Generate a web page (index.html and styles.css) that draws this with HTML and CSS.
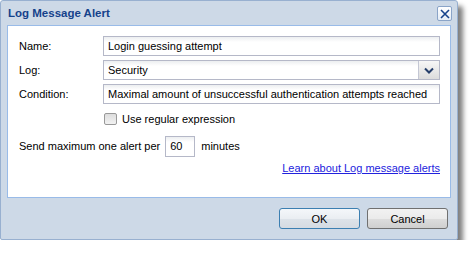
FILE: index.html
```html
<!DOCTYPE html>
<html>
<head>
  <meta charset="utf-8">
  <title>Log Message Alert</title>
  <link rel="stylesheet" href="styles.css">
</head>
<body>
  <div class="window">
    <div class="window-header">
      <span class="window-title">Log Message Alert</span>
      <span class="tool-close">
        <svg width="12" height="12" viewBox="0 0 12 12"><path d="M2 2 L10 10 M10 2 L2 10" stroke="#15428b" stroke-width="1.6" fill="none"/></svg>
      </span>
    </div>

    <div class="window-body">
      <div class="form-row">
        <label class="form-label">Name:</label>
        <div class="text-field"><span class="field-value">Login guessing attempt</span></div>
      </div>
      <div class="form-row">
        <label class="form-label">Log:</label>
        <div class="text-field combo">
          <span class="field-value">Security</span>
          <span class="combo-trigger">
            <svg width="10" height="7" viewBox="0 0 10 7"><path d="M1 1.5 L5 5.5 L9 1.5" stroke="#253e6a" stroke-width="2" fill="none"/></svg>
          </span>
        </div>
      </div>
      <div class="form-row">
        <label class="form-label">Condition:</label>
        <div class="text-field"><span class="field-value">Maximal amount of unsuccessful authentication attempts reached</span></div>
      </div>
      <div class="form-row check-row">
        <span class="checkbox"></span>
        <span>Use regular expression</span>
      </div>
      <div class="form-row send-row">
        <span>Send maximum one alert per</span>
        <div class="text-field small"><span class="field-value">60</span></div>
        <span>minutes</span>
      </div>
      <div class="link-row">
        <a href="#" class="help-link">Learn about Log message alerts</a>
      </div>
    </div>

    <div class="window-footer">
      <button class="btn btn-focus">OK</button>
      <button class="btn">Cancel</button>
    </div>
  </div>
</body>
</html>
```

FILE: styles.css
```css
* {
    font-family: "Liberation Sans", Arial, sans-serif;
    font-size: 11px;
    box-sizing: border-box;
}
body {
    margin: 0;
    background: #fff;
}
.window {
    width: 458px;
    height: 240px;
    border: 1px solid #98b0d0;
    border-radius: 3px 3px 2px 2px;
    background: #cdd9e7;
    box-shadow: 5px 6px 5px rgba(0, 0, 0, 0.5);
    display: flex;
    flex-direction: column;
}
.window-header {
    height: 24px;
    display: flex;
    align-items: center;
    justify-content: space-between;
    padding: 0 5px 0 7px;
}
.window-title {
    font-weight: bold;
    font-size: 11.5px;
    color: #15428b;
}
.tool-close {
    width: 15px;
    height: 15px;
    border: 1px solid #8aa4c8;
    border-radius: 2px;
    background: linear-gradient(#ffffff, #e4ecf6);
    display: flex;
    align-items: center;
    justify-content: center;
    margin-top: 1px;
}
.window-body {
    margin: 0 6px;
    height: 173px;
    border: 1px solid #99bbe8;
    background: #fff;
    padding: 10px 10px 0 10px;
}
.form-row {
    display: flex;
    align-items: center;
    height: 20px;
    margin-bottom: 4px;
}
.form-label {
    width: 85px;
    padding-left: 1px;
    color: #000;
}
.text-field {
    flex: 1;
    height: 20px;
    border: 1px solid #b5b8c8;
    background: linear-gradient(#eceef0, #fff 5px);
    display: flex;
    align-items: center;
    padding-left: 4px;
}
.field-value {
    white-space: nowrap;
}
.combo {
    padding-right: 0;
}
.combo .field-value {
    flex: 1;
}
.combo-trigger {
    width: 21px;
    height: 18px;
    border-left: 1px solid #c4c7d4;
    background: linear-gradient(#f7f7f7, #dcdcdc);
    display: flex;
    align-items: center;
    justify-content: center;
}
.check-row {
    padding-left: 86px;
    margin-top: 5px;
    gap: 5px;
}
.checkbox {
    width: 13px;
    height: 12px;
    border: 1px solid #999;
    border-radius: 2px;
    background: linear-gradient(#ddd, #f2f2f2);
}
.send-row {
    margin-top: 7px;
    gap: 6px;
    padding-left: 1px;
}
.text-field.small {
    flex: 0 0 30px;
    height: 21px;
    margin-left: -1px;
}
.link-row {
    display: flex;
    justify-content: flex-end;
    margin-top: 6px;
}
.help-link {
    color: #2222dd;
    text-decoration: underline;
}
.window-footer {
    flex: 1;
    display: flex;
    justify-content: flex-end;
    align-items: flex-start;
    padding: 10px 9px 0 0;
    gap: 7px;
}
.btn {
    width: 81px;
    height: 21px;
    border: 1px solid #707070;
    border-radius: 3px;
    background: linear-gradient(#f2f2f2 0%, #ebebeb 50%, #dddddd 51%, #cfcfcf 100%);
    color: #000;
    padding: 0;
}
.btn-focus {
    border-color: #3c7fb1;
    background: linear-gradient(#f4f7fa 0%, #eaeef2 50%, #dde3e9 51%, #d5dbe2 100%);
}
```
